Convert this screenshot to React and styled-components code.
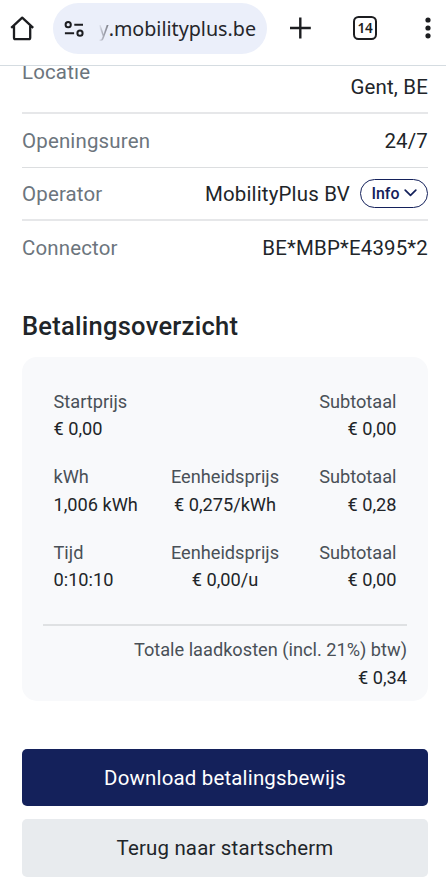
import React from 'react'
import styled, { createGlobalStyle } from 'styled-components'

const GlobalStyle = createGlobalStyle`
* {
    box-sizing:border-box;
}
body {
    margin:0;
    background-color:#fff;
    color:#212529;
    font-family:Roboto, sans-serif;
}
`

const Container = styled.div`
width:446px;
height:894px;
overflow:hidden;
background-color:#fff;
`

const Toolbar = styled.header`
height:66px;
padding:3px 0 9px;
display:flex;
align-items:center;
border-bottom:1px solid #d5dce1;
`

const HomeButton = styled.div`
width:53px;
height:54px;
padding:13px 0 0 10px;
`

const AddressBar = styled.div`
width:214px;
height:51px;
margin-top:-2px;
border-radius:26px;
background-color:#ebeffa;
display:flex;
align-items:center;
padding-left:11px;
`

const Url = styled.div`
margin-left:8px;
width:164px;
display:flex;
justify-content:flex-end;
overflow:hidden;
white-space:nowrap;
font-family:"Noto Sans", sans-serif;
font-size:19.7px;
line-height:30px;
color:#25262b;
`

const Faded = styled.span`
color:transparent;
background:linear-gradient(90deg, #ebeffa 0%, #b4b6c1 30%, #777982 100%);
background-clip:text;
`

const Actions = styled.div`
flex:1;
display:flex;
margin-top:-3px;
`

const Tabs = styled.div`
width:24px;
height:24px;
margin-left:42px;
border:2px solid #1c1d20;
border-radius:5.5px;
display:flex;
align-items:center;
justify-content:center;
font-family:"Noto Sans", sans-serif;
font-size:13.5px;
font-weight:600;
letter-spacing:-0.2px;
color:#1c1d20;
`

const Content = styled.main`
padding:0 18px 0 22px;
`

const Details = styled.dl`
margin:0;
height:208.6px;
overflow:hidden;
display:flex;
flex-direction:column;
justify-content:flex-end;
`

const DetailRow = styled.div`
flex:none;
height:${props => props.$tall ? "84px" : "53.4px"};
padding:${props => props.$tall ? "11px 0 9.6px" : "11.2px 0 10.4px"};
display:flex;
justify-content:space-between;
align-items:${props => props.$tall ? "flex-end" : "center"};
border-bottom:${props => props.$line || 0}px solid ${props => props.$line === 2 ? "#e6e7e9" : "#dcdee0"};
font-size:20.45px;
line-height:30.6px;
letter-spacing:0.17px;
`

const Label = styled.dt`
color:#6c757d;
padding-bottom:${props => props.$raised ? "15px" : "0"};
`

const Value = styled.dd`
margin:0;
display:flex;
align-items:center;
`

const InfoButton = styled.button`
width:68px;
height:29px;
margin:-1px 0 0 10px;
padding:0 0 0 10.5px;
display:flex;
align-items:center;
border:1.4px solid #14215b;
border-radius:15px;
background:none;
color:#14215b;
font-family:Roboto, sans-serif;
font-size:15.9px;
font-weight:500;
`

const Title = styled.h2`
margin:36.4px 0 15.5px;
font-size:25.5px;
line-height:31px;
font-weight:500;
letter-spacing:0.26px;
`

const Card = styled.section`
height:344px;
padding:30.5px 21px 0;
border-radius:15px;
background-color:#f8f9fb;
font-size:18.2px;
line-height:27.3px;
`

const PriceRow = styled.div`
height:75.5px;
padding:0 10.5px;
display:grid;
grid-template-columns:1fr 1fr 1fr;
`

const Cell = styled.div`
white-space:nowrap;
text-align:${props => props.$align || "left"};
`

const Caption = styled.div`
color:#495057;
`

const Amount = styled.div`
color:#212529;
`

const Total = styled.div`
margin-top:10px;
padding-top:10px;
border-top:2px solid #dfe1e3;
text-align:right;
`

const Buttons = styled.div`
margin-top:47.5px;
display:flex;
flex-direction:column;
gap:13px;
`

const Button = styled.button`
height:57.4px;
padding:0;
border:0;
border-radius:5px;
background-color:${props => props.$primary ? "#14215b" : "#e8ebee"};
color:${props => props.$primary ? "#fff" : "#212529"};
font-family:Roboto, sans-serif;
font-size:20.45px;
letter-spacing:0.18px;
`

const HomeIcon = () => (
  <svg width="24" height="26" viewBox="0 0 24 26" fill="none" stroke="#1c1d20" strokeWidth="2.3" strokeLinejoin="round">
    <path d="M1.2 11.9 12.2 1.7l11 10.2M4 10.1v11.6q0 1.4 1.4 1.4h13.4q1.4 0 1.4-1.4V10.1" />
  </svg>
)

const SettingsIcon = () => (
  <svg width="20" height="18" viewBox="0 0 20 18" fill="none" stroke="#1c1d20" strokeWidth="2">
    <circle cx="4.2" cy="4.7" r="2.6" />
    <circle cx="16" cy="13.2" r="2.6" />
    <path d="M10.3 4.7H19M.9 13.2h9.2" />
  </svg>
)

const PlusIcon = () => (
  <svg width="22" height="24" viewBox="0 0 22 24" style={{marginLeft:"22px"}} stroke="#1c1d20" strokeWidth="2.4">
    <path d="M11.3 1.5v21M1 12h20.8" />
  </svg>
)

const MoreIcon = () => (
  <svg width="6" height="24" viewBox="0 0 6 24" style={{marginLeft:"48px"}} fill="#1c1d20">
    <circle cx="3" cy="4" r="2.6" />
    <circle cx="3" cy="12" r="2.6" />
    <circle cx="3" cy="19.8" r="2.6" />
  </svg>
)

const ChevronIcon = () => (
  <svg width="13" height="8" viewBox="0 0 13 8" style={{marginLeft:"5px"}} fill="none" stroke="#14215b" strokeWidth="1.7" strokeLinecap="round" strokeLinejoin="round">
    <path d="M1.2 1.2 6.5 6.4 11.8 1.2" />
  </svg>
)

const prices = [
  [["Startprijs", "€ 0,00"], ["", ""], ["Subtotaal", "€ 0,00"]],
  [["kWh", "1,006 kWh"], ["Eenheidsprijs", "€ 0,275/kWh"], ["Subtotaal", "€ 0,28"]],
  [["Tijd", "0:10:10"], ["Eenheidsprijs", "€ 0,00/u"], ["Subtotaal", "€ 0,00"]],
]

const aligns = ["left", "center", "right"]

const App = () => {
  return (
    <Container>
        <GlobalStyle />
        <Toolbar>
            <HomeButton><HomeIcon /></HomeButton>
            <AddressBar>
                <SettingsIcon />
                <Url><Faded>y</Faded>.mobilityplus.be</Url>
            </AddressBar>
            <Actions>
                <PlusIcon />
                <Tabs>14</Tabs>
                <MoreIcon />
            </Actions>
        </Toolbar>
        <Content>
            <Details>
                <DetailRow $tall $line={2}>
                    <Label $raised>Locatie</Label>
                    <Value>Gent, BE</Value>
                </DetailRow>
                <DetailRow $line={1}>
                    <Label>Openingsuren</Label>
                    <Value>24/7</Value>
                </DetailRow>
                <DetailRow $line={2}>
                    <Label>Operator</Label>
                    <Value>
                        MobilityPlus BV
                        <InfoButton>Info <ChevronIcon /></InfoButton>
                    </Value>
                </DetailRow>
                <DetailRow>
                    <Label>Connector</Label>
                    <Value>BE*MBP*E4395*2</Value>
                </DetailRow>
            </Details>
            <Title>Betalingsoverzicht</Title>
            <Card>
                {prices.map((row, i) => (
                  <PriceRow key={i}>
                      {row.map(([caption, amount], j) => (
                        <Cell key={j} $align={aligns[j]}>
                            <Caption>{caption}</Caption>
                            <Amount>{amount}</Amount>
                        </Cell>
                      ))}
                  </PriceRow>
                ))}
                <Total>
                    <Caption>Totale laadkosten (incl. 21%) btw)</Caption>
                    <Amount>€ 0,34</Amount>
                </Total>
            </Card>
            <Buttons>
                <Button $primary>Download betalingsbewijs</Button>
                <Button>Terug naar startscherm</Button>
            </Buttons>
        </Content>
    </Container>
  )
}

export default App
